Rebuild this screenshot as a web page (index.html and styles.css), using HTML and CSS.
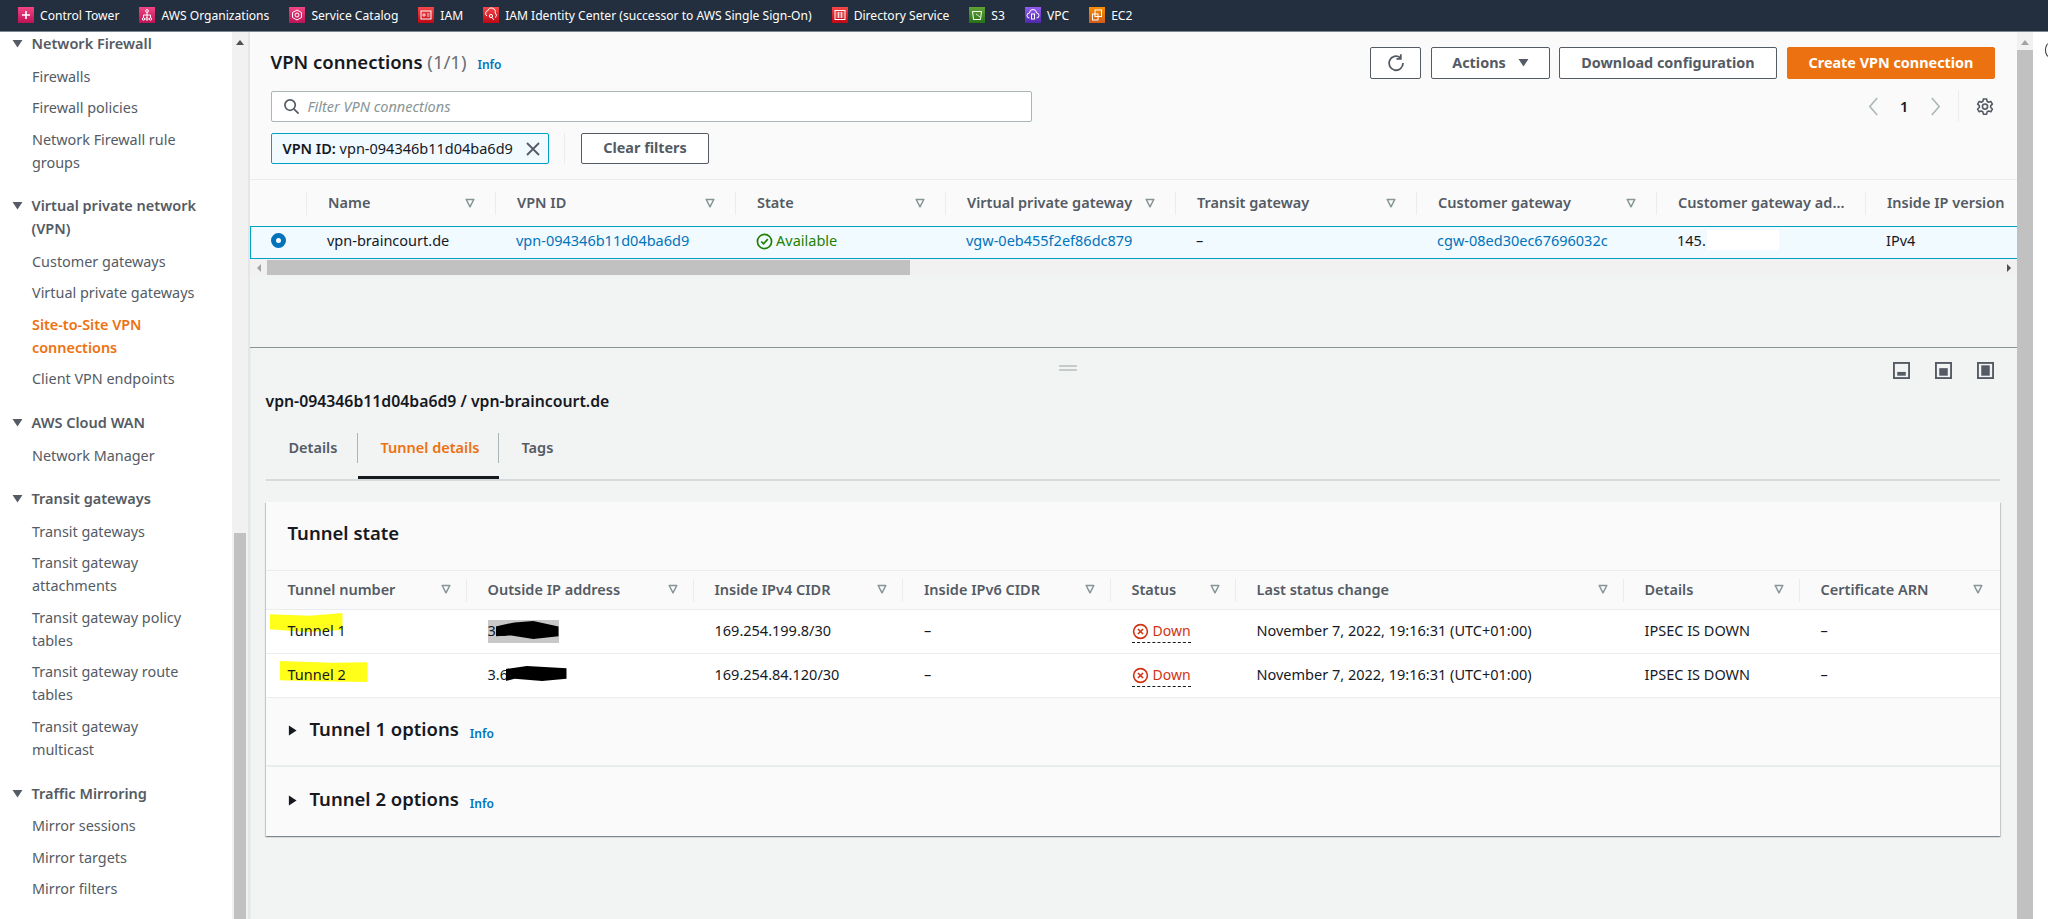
FILE: index.html
```html
<!DOCTYPE html>
<html lang="en">
<head>
<meta charset="utf-8">
<title>VPN connections</title>
<link rel="stylesheet" href="styles.css">
</head>
<body>
<svg class="defs" width="0" height="0" aria-hidden="true">
  <symbol id="caret" viewBox="0 0 10 10"><path d="M1.2 1.5h7.6L5 8.8z" fill="none" stroke="#879596" stroke-width="1.5" stroke-linejoin="round"/></symbol>
  <symbol id="tri" viewBox="0 0 12 10"><path d="M.5 1h11L6 9.5z" fill="#545b64"/></symbol>
  <symbol id="down" viewBox="0 0 18 18"><circle cx="9" cy="9" r="7.3" fill="none" stroke="#d13212" stroke-width="1.7"/><path d="M6.3 6.3l5.4 5.4M11.700 6.3l-5.4 5.4" stroke="#d13212" stroke-width="1.7"/></symbol>
  <symbol id="right" viewBox="0 0 10 12"><path d="M1 .5L9.5 6 1 11.5z" fill="#16191f"/></symbol>
</svg>

<header class="topbar">
  <a class="svc"><svg class="ico pink" viewBox="0 0 16 16"><path d="M8 4v8M4 8h8" stroke="#fff" stroke-width="1.6"/></svg>Control Tower</a>
  <a class="svc"><svg class="ico pink" viewBox="0 0 16 16"><path d="M8 5v3M4.500 11V8h7v3M8 8v3" fill="none" stroke="#fff"/><circle cx="8" cy="4" r="1.4" fill="none" stroke="#fff"/><circle cx="4.500" cy="12" r="1.2" fill="none" stroke="#fff"/><circle cx="8" cy="12" r="1.2" fill="none" stroke="#fff"/><circle cx="11.500" cy="12" r="1.2" fill="none" stroke="#fff"/></svg>AWS Organizations</a>
  <a class="svc"><svg class="ico pink" viewBox="0 0 16 16"><path d="M8 3l4.500 2.500v5L8 13l-4.500-2.500v-5z" fill="none" stroke="#fff"/><circle cx="8" cy="8" r="2" fill="none" stroke="#fff"/></svg>Service Catalog</a>
  <a class="svc"><svg class="ico red" viewBox="0 0 16 16"><rect x="3" y="4" width="10" height="8" fill="none" stroke="#fff"/><path d="M5 7h2v2H5zM9 7h2.500M9 9h2.500" fill="none" stroke="#fff" stroke-width=".8"/></svg>IAM</a>
  <a class="svc"><svg class="ico red" viewBox="0 0 16 16"><path d="M4 9a3 3 0 0 1 1-5.500A3.500 3.500 0 0 1 12 6a2.500 2.500 0 0 1 0 4.500" fill="none" stroke="#fff"/><circle cx="8" cy="9" r="1.600" fill="none" stroke="#fff"/><path d="M9 10.500l2 2.500" stroke="#fff"/></svg>IAM Identity Center (successor to AWS Single Sign-On)</a>
  <a class="svc"><svg class="ico red" viewBox="0 0 16 16"><rect x="3" y="3.500" width="10" height="9" fill="none" stroke="#fff"/><path d="M4.500 6h7M4.500 8h7M4.500 10h7M6.500 5v6M9.500 5v6" stroke="#fff" stroke-width=".7"/></svg>Directory Service</a>
  <a class="svc"><svg class="ico green" viewBox="0 0 16 16"><path d="M3.500 4.500h9l-1 8h-7z" fill="none" stroke="#fff"/><path d="M7 7l4 3" stroke="#fff" stroke-width=".8"/></svg>S3</a>
  <a class="svc"><svg class="ico purple" viewBox="0 0 16 16"><path d="M4.500 11a2.500 2.500 0 0 1 0-5 3.500 3.500 0 0 1 7 0 2.500 2.500 0 0 1 0 5" fill="none" stroke="#fff"/><rect x="6.500" y="7" width="3" height="5" fill="none" stroke="#fff"/></svg>VPC</a>
  <a class="svc"><svg class="ico orange" viewBox="0 0 16 16"><rect x="6" y="3" width="6.500" height="6.500" fill="none" stroke="#fff"/><rect x="3.500" y="7" width="5.500" height="6" fill="none" stroke="#fff"/></svg>EC2</a>
</header>

<div class="shell">
  <nav class="sidebar">
    <section class="group">
      <h3 class="group-head"><svg class="tri"><use href="#tri"/></svg>Network Firewall</h3>
      <ul class="links">
        <li>Firewalls</li><li>Firewall policies</li><li>Network Firewall rule groups</li>
      </ul>
    </section>
    <section class="group">
      <h3 class="group-head"><svg class="tri"><use href="#tri"/></svg>Virtual private network (VPN)</h3>
      <ul class="links">
        <li>Customer gateways</li><li>Virtual private gateways</li><li class="current">Site-to-Site VPN connections</li><li>Client VPN endpoints</li>
      </ul>
    </section>
    <section class="group">
      <h3 class="group-head"><svg class="tri"><use href="#tri"/></svg>AWS Cloud WAN</h3>
      <ul class="links"><li>Network Manager</li></ul>
    </section>
    <section class="group">
      <h3 class="group-head"><svg class="tri"><use href="#tri"/></svg>Transit gateways</h3>
      <ul class="links">
        <li>Transit gateways</li><li>Transit gateway attachments</li><li>Transit gateway policy tables</li><li>Transit gateway route tables</li><li>Transit gateway multicast</li>
      </ul>
    </section>
    <section class="group">
      <h3 class="group-head"><svg class="tri"><use href="#tri"/></svg>Traffic Mirroring</h3>
      <ul class="links"><li>Mirror sessions</li><li>Mirror targets</li><li>Mirror filters</li></ul>
    </section>
  </nav>
  <div class="vscroll side-scroll"><span class="up"></span><span class="thumb"></span></div>

  <main class="main">
    <section class="upper">
      <div class="list-head">
        <div class="head-row">
          <h1 class="page-title">VPN connections <span class="count">(1/1)</span><a class="info">Info</a></h1>
          <div class="actions">
            <button class="btn btn-icon"><svg viewBox="0 0 20 20" width="20" height="20"><path d="M14.300 4.700A7 7 0 1 0 17 10" fill="none" stroke="#545b64" stroke-width="1.800"/><path d="M14.800 1.200v4.600h-4.400" fill="none" stroke="#545b64" stroke-width="1.800"/></svg></button>
            <button class="btn btn-actions">Actions<svg class="act-tri" viewBox="0 0 12 10"><path d="M.5 1h11L6 9.500z" fill="#545b64"/></svg></button>
            <button class="btn btn-dl">Download configuration</button>
            <button class="btn btn-primary">Create VPN connection</button>
          </div>
        </div>
        <div class="filter-row">
          <div class="filter">
            <svg viewBox="0 0 18 18" width="17" height="17"><circle cx="7.500" cy="7.500" r="5.500" fill="none" stroke="#545b64" stroke-width="1.800"/><path d="M11.500 11.500l5 5" stroke="#545b64" stroke-width="1.800"/></svg>
            <span class="placeholder">Filter VPN connections</span>
          </div>
          <div class="pager">
            <svg class="chev" viewBox="0 0 10 18"><path d="M8.500 1L1.500 9l7 8" fill="none" stroke="#aab7b8" stroke-width="1.500"/></svg>
            <span class="page-no">1</span>
            <svg class="chev" viewBox="0 0 10 18"><path d="M1.500 1l7 8-7 8" fill="none" stroke="#aab7b8" stroke-width="1.500"/></svg>
            <span class="pager-sep"></span>
            <svg class="gear" viewBox="0 0 18 18"><path d="M7.400 1h3.200l.5 2.300 1.500.9 2.200-.8 1.600 2.800-1.700 1.500v1.800l1.700 1.500-1.600 2.800-2.200-.8-1.500.9-.5 2.300H7.400l-.5-2.300-1.500-.9-2.200.8-1.600-2.800 1.700-1.500V7.700L1.600 6.200l1.600-2.800 2.200.8 1.500-.9z" fill="none" stroke="#545b64" stroke-width="1.600" stroke-linejoin="round"/><circle cx="9" cy="8.600" r="2.600" fill="none" stroke="#545b64" stroke-width="1.600"/></svg>
          </div>
        </div>
        <div class="chip-row">
          <div class="chip"><span class="chip-text"><b>VPN ID:</b> vpn-094346b11d04ba6d9</span><svg viewBox="0 0 14 14" width="14" height="14"><path d="M1 1l12 12M13 1L1 13" stroke="#545b64" stroke-width="1.800"/></svg></div>
          <span class="chip-sep"></span>
          <button class="btn btn-clear">Clear filters</button>
        </div>
      </div>

      <div class="vpn-table">
        <div class="th th-radio"></div>
        <div class="th">Name<svg class="caret"><use href="#caret"/></svg></div>
        <div class="th">VPN ID<svg class="caret"><use href="#caret"/></svg></div>
        <div class="th">State<svg class="caret"><use href="#caret"/></svg></div>
        <div class="th">Virtual private gateway<svg class="caret"><use href="#caret"/></svg></div>
        <div class="th">Transit gateway<svg class="caret"><use href="#caret"/></svg></div>
        <div class="th">Customer gateway<svg class="caret"><use href="#caret"/></svg></div>
        <div class="th th-plain">Customer gateway ad...</div>
        <div class="th th-plain">Inside IP version</div>
      </div>
      <div class="vpn-table vpn-row">
        <div class="td td-radio"><span class="radio"></span></div>
        <div class="td">vpn-braincourt.de</div>
        <div class="td"><a class="link">vpn-094346b11d04ba6d9</a></div>
        <div class="td state-ok"><svg viewBox="0 0 18 18" width="17" height="17"><circle cx="9" cy="9" r="7.500" fill="none" stroke="#1d8102" stroke-width="1.800"/><path d="M5.500 9l2.500 2.500 4.500-5" fill="none" stroke="#1d8102" stroke-width="1.800"/></svg>Available</div>
        <div class="td"><a class="link">vgw-0eb455f2ef86dc879</a></div>
        <div class="td">–</div>
        <div class="td"><a class="link">cgw-08ed30ec67696032c</a></div>
        <div class="td">145.<span class="redact-white"></span></div>
        <div class="td">IPv4</div>
      </div>
      <div class="hscroll">
        <span class="h-left"></span>
        <span class="h-thumb"></span>
        <span class="h-right"></span>
      </div>
    </section>

    <section class="lower">
      <div class="lower-top">
        <span class="handle"></span>
        <div class="sizes">
          <svg class="size" viewBox="0 0 18 18"><rect x="1" y="1" width="16" height="16" fill="none" stroke="#545b64" stroke-width="2"/><rect x="4.500" y="10.500" width="9" height="4" fill="#545b64"/></svg>
          <svg class="size" viewBox="0 0 18 18"><rect x="1" y="1" width="16" height="16" fill="none" stroke="#545b64" stroke-width="2"/><rect x="4.500" y="6.500" width="9" height="8" fill="#545b64"/></svg>
          <svg class="size" viewBox="0 0 18 18"><rect x="1" y="1" width="16" height="16" fill="none" stroke="#545b64" stroke-width="2"/><rect x="4.500" y="3.500" width="9" height="11" fill="#545b64"/></svg>
        </div>
      </div>
      <h2 class="detail-title">vpn-094346b11d04ba6d9 / vpn-braincourt.de</h2>
      <div class="tabs">
        <a class="tab tab-first">Details</a>
        <a class="tab tab-active">Tunnel details</a>
        <a class="tab tab-last">Tags</a>
      </div>
      <article class="card">
        <h2 class="card-title">Tunnel state</h2>
        <div class="tun-table tun-head">
          <div class="th2">Tunnel number<svg class="caret"><use href="#caret"/></svg></div>
          <div class="th2">Outside IP address<svg class="caret"><use href="#caret"/></svg></div>
          <div class="th2">Inside IPv4 CIDR<svg class="caret"><use href="#caret"/></svg></div>
          <div class="th2">Inside IPv6 CIDR<svg class="caret"><use href="#caret"/></svg></div>
          <div class="th2">Status<svg class="caret"><use href="#caret"/></svg></div>
          <div class="th2">Last status change<svg class="caret"><use href="#caret"/></svg></div>
          <div class="th2">Details<svg class="caret"><use href="#caret"/></svg></div>
          <div class="th2">Certificate ARN<svg class="caret"><use href="#caret"/></svg></div>
        </div>
        <div class="tun-table tun-row">
          <div class="td2 mark-cell"><span class="mark mark-1"></span><span class="on-mark">Tunnel 1</span></div>
          <div class="td2 ip-cell"><span class="select-box"></span><span class="on-mark">3.6</span><span class="scribble scribble-1"></span></div>
          <div class="td2">169.254.199.8/30</div>
          <div class="td2">–</div>
          <div class="td2"><span class="down"><svg class="down-ico"><use href="#down"/></svg>Down</span></div>
          <div class="td2">November 7, 2022, 19:16:31 (UTC+01:00)</div>
          <div class="td2">IPSEC IS DOWN</div>
          <div class="td2">–</div>
        </div>
        <div class="tun-table tun-row">
          <div class="td2 mark-cell"><span class="mark mark-2"></span><span class="on-mark">Tunnel 2</span></div>
          <div class="td2 ip-cell"><span class="on-mark">3.6</span><span class="scribble scribble-2"></span></div>
          <div class="td2">169.254.84.120/30</div>
          <div class="td2">–</div>
          <div class="td2"><span class="down"><svg class="down-ico"><use href="#down"/></svg>Down</span></div>
          <div class="td2">November 7, 2022, 19:16:31 (UTC+01:00)</div>
          <div class="td2">IPSEC IS DOWN</div>
          <div class="td2">–</div>
        </div>
        <div class="option"><svg class="opt-arrow"><use href="#right"/></svg><h3 class="opt-title">Tunnel 1 options</h3><a class="info">Info</a></div>
        <div class="option"><svg class="opt-arrow"><use href="#right"/></svg><h3 class="opt-title">Tunnel 2 options</h3><a class="info">Info</a></div>
      </article>
    </section>
  </main>
  <div class="vscroll main-scroll"><span class="up"></span><span class="thumb"></span></div>
  <div class="edge"><span class="edge-arc"></span></div>
</div>
</body>
</html>
```

FILE: styles.css
```css
* { box-sizing: border-box; }
html, body { margin: 0; height: 919px; overflow: hidden; }
body {
  font-family: "Noto Sans", "Open Sans", sans-serif;
  font-size: 14.5px;
  color: #16191f;
  background: #fff;
  display: flex;
  flex-direction: column;
}
.defs { position: absolute; }
h1, h2, h3, ul { margin: 0; padding: 0; }
ul { list-style: none; }

/* top bar */
.topbar {
  height: 32px;
  flex: none;
  background: #232f3e;
  border-bottom: 1px solid #7c8792;
  display: flex;
  align-items: center;
  padding: 0 0 1px 18px;
  gap: 20px;
  color: #fff;
  font-size: 12.1px;
  white-space: nowrap;
}
.svc { display: flex; align-items: center; gap: 6px; }
.ico { width: 16px; height: 16px; flex: none; }
.pink { background: linear-gradient(#f34482, #bc1356); }
.red { background: linear-gradient(#f54749, #bd0816); }
.green { background: linear-gradient(#60a337, #277116); }
.purple { background: linear-gradient(#945df2, #4d27aa); }
.orange { background: linear-gradient(#f78e04, #d05c17); }

.shell { flex: 1; display: flex; min-height: 0; }

/* sidebar */
.sidebar {
  width: 232px;
  flex: none;
  padding: 0 32px 0 12px;
  font-size: 14.4px;
  color: #545b64;
  line-height: 23px;
  overflow: hidden;
  background: #fff;
}
.group { margin-bottom: 20.75px; }
.group-head {
  font-size: 14.5px;
  font-weight: 600;
  color: #545b64;
  padding-left: 19.5px;
  position: relative;
  line-height: 23px;
}
.tri { position: absolute; left: 0; top: 7px; width: 11px; height: 9px; }
.links { padding: 9.5px 0 0 20px; display: flex; flex-direction: column; gap: 8.5px; }
.current { color: #ec7211; font-weight: 600; }

/* scrollbars */
.vscroll { width: 18px; flex: none; background: #f1f1f1; display: flex; flex-direction: column; border-right: 1px solid #dfe2e2; padding: 0 2px; }
.side-scroll { border-right: 2px solid #e4e6e6; }
.main-scroll { width: 16px; padding: 0; border: 0; }
.up { width: 0; height: 0; border: 4px solid transparent; border-bottom: 5px solid #505050; border-top: 0; align-self: center; margin-top: 8px; }
.side-scroll .thumb { margin-top: 488px; flex: 1; background: #c1c1c1; }
.main-scroll .thumb { margin-top: 5px; flex: 1; background: #c1c1c1; }
.main-scroll .up { border-bottom-color: #a3a3a3; }

.edge { width: 15px; flex: none; position: relative; }
.edge-arc { position: absolute; left: 12px; top: 11px; width: 8px; height: 14px; border: 1.5px solid #333; border-radius: 50%; }

/* main */
.main { flex: 1; min-width: 0; background: #f2f3f3; display: flex; flex-direction: column; }
.upper { height: 316px; flex: none; border-bottom: 1px solid #879596; }
.list-head { height: 148px; background: #fafafa; padding: 15px 22px 0 20.5px; border-bottom: 1px solid #eaeded; }
.head-row { display: flex; justify-content: space-between; align-items: center; height: 32px; }
.page-title { font-size: 18.5px; font-weight: 600; line-height: 32px; }
.count { font-weight: 400; color: #687078; }
.info { color: #0073bb; font-size: 12px; font-weight: 600; margin-left: 11px; }
.actions { display: flex; gap: 10px; }
.btn {
  font: 700 14.4px "Noto Sans", sans-serif;
  height: 32px;
  background: #fff;
  color: #545b64;
  border: 1px solid #545b64;
  border-radius: 2px;
  padding: 0 0 1px;
  display: flex;
  align-items: center;
  justify-content: center;
}
.btn-icon { width: 51px; }
.btn-actions { width: 119px; gap: 12px; }
.act-tri { width: 11px; height: 9px; }
.btn-dl { width: 218px; margin-left: -1px; }
.btn-primary { width: 208px; background: #ec7211; border-color: #ec7211; color: #fff; }
.filter-row { display: flex; justify-content: space-between; margin-top: 12px; }
.filter {
  width: 761px;
  height: 31px;
  background: #fff;
  border: 1px solid #aab7b8;
  border-radius: 2px;
  display: flex;
  align-items: center;
  padding-left: 11px;
  gap: 8px;
}
.placeholder { font-style: italic; color: #879596; padding-bottom: 2px; }
.pager { display: flex; align-items: center; height: 31px; margin-right: 1px; }
.chev { width: 11px; height: 19px; }
.page-no { width: 20px; margin: 0 15.75px; text-align: center; font-weight: 600; color: #16191f; padding-bottom: 2px; }
.pager-sep { width: 1px; height: 31px; background: #eaeded; margin: 0 17px; }
.gear { width: 18px; height: 18px; }
.chip-row { display: flex; align-items: center; margin-top: 11px; }
.chip {
  width: 278.5px;
  height: 31px;
  background: #f1faff;
  border: 1px solid #00a1c9;
  border-radius: 2px;
  display: flex;
  align-items: center;
  justify-content: space-between;
  padding: 0 8px 0 11px;
  white-space: nowrap;
}
.chip-text { padding-bottom: 2px; }
.chip-text b { font-weight: 600; }
.chip-sep { width: 1px; height: 31px; background: #eaeded; margin: 0 16px 0 15px; }
.btn-clear { width: 128px; height: 31px; padding-bottom: 3px; }

.vpn-table {
  display: grid;
  grid-template-columns: 55px 189px 240px 210px 230px 241px 240px 209px 1fr;
  white-space: nowrap;
}
.vpn-table:not(.vpn-row) { height: 46px; background: #fafafa; align-items: center; padding-left: 1px; }
.th {
  height: 23px;
  padding: 0 20px 2px 21px;
  border-left: 1px solid #eaeded;
  color: #545b64;
  font-weight: 600;
  display: flex;
  justify-content: space-between;
  align-items: center;
}
.th .caret { margin-top: 2px; }
.th-radio { border-left: 0; }
.th-plain { padding-right: 0; }
.caret { width: 10px; height: 10px; flex: none; }
.vpn-row {
  height: 33px;
  background: #f1faff;
  border-top: 1px solid #00a1c9;
  border-bottom: 1px solid #00a1c9;
  border-left: 1px solid #00a1c9;
  align-items: center;
  padding-bottom: 5px;
}
.td { padding-left: 21px; display: flex; align-items: center; position: relative; }
.td-radio { padding-left: 20px; }
.radio { width: 15px; height: 15px; border-radius: 50%; border: 5px solid #0073bb; background: #fff; }
.link { color: #0073bb; }
.state-ok { color: #1d8102; gap: 3px; }
.state-ok svg { margin-top: 2px; }
.redact-white { position: absolute; left: 51px; top: 0; width: 72px; height: 20px; background: #fff; }
.hscroll { height: 17px; background: #f1f1f1; display: flex; align-items: center; position: relative; }
.h-left, .h-right { width: 0; height: 0; border: 4px solid transparent; }
.h-left { border-right: 4px solid #a3a3a3; border-left: 0; margin-left: 7px; }
.h-thumb { width: 643px; height: 15px; background: #c1c1c1; margin-left: 6px; }
.h-right { border-left: 4px solid #505050; border-right: 0; margin-left: auto; margin-right: 6px; }

/* lower pane */
.lower { flex: 1; padding: 0 17px 0 14.5px; border-left: 1px solid #eaeded; min-height: 0; }
.lower-top { height: 31px; display: flex; justify-content: space-between; padding-top: 14px; position: relative; }
.handle { width: 18px; height: 6px; margin-left: 793.5px; margin-top: 3px; border-top: 2px solid #c5cbcb; border-bottom: 2px solid #c5cbcb; }
.sizes { display: flex; gap: 25px; margin-right: 6px; }
.size { width: 17px; height: 17px; }
.detail-title { font-size: 15.8px; font-weight: 600; line-height: 24px; margin-top: 10px; white-space: nowrap; }
.tabs { display: flex; height: 48px; margin-top: 20px; border-bottom: 2px solid #d5dbdb; color: #545b64; font-weight: 600; }
.tab { height: 46px; padding: 0 0 18px 23px; display: flex; align-items: center; position: relative; }
.tab-first { width: 92px; padding-left: 23px; }
.tab-active { width: 141px; color: #ec7211; }
.tab-first::after, .tab-active::after { content: ""; position: absolute; right: 0; top: 0; width: 1px; height: 30px; background: #aab7b8; }
.tab-active::before { content: ""; position: absolute; left: 0; right: 0; bottom: 0; height: 3px; background: #16191f; }
.card { margin-top: 21px; height: 334px; background: #fafafa; box-shadow: 0 1px 1px 0 rgba(0,28,36,.3), 1px 1px 1px 0 rgba(0,28,36,.15), -1px 1px 1px 0 rgba(0,28,36,.15); }
.card-title { font-size: 18.5px; font-weight: 600; height: 68px; line-height: 62px; padding-left: 22px; }
.tun-table {
  display: grid;
  grid-template-columns: 200px 227px 209.5px 207.5px 125px 388px 176px 1fr;
  white-space: nowrap;
}
.tun-head { height: 40px; border-top: 1px solid #eaeded; border-bottom: 1px solid #eaeded; align-items: center; }
.th2 { height: 23px; padding: 0 15px 3px 21px; border-left: 1px solid #eaeded; color: #545b64; font-weight: 600; display: flex; justify-content: space-between; align-items: center; }
.th2:first-child { border-left: 0; padding-left: 22px; }
.th2:last-child { padding-right: 17px; }
.tun-row { height: 44px; background: #fff; border-bottom: 1px solid #eaeded; align-items: center; padding-bottom: 3px; }
.td2 { padding-left: 22px; position: relative; }
.on-mark { position: relative; }
.mark { position: absolute; background: #ffff1a; }
.mark-1 { left: 4px; top: -7px; width: 73px; height: 19px; clip-path: polygon(0 6%, 55% 14%, 100% 0, 100% 90%, 50% 100%, 0 85%); }
.mark-2 { left: 14px; top: -3px; width: 88px; height: 21px; clip-path: polygon(0 0, 60% 8%, 100% 6%, 100% 100%, 40% 96%, 0 92%); }
.select-box { position: absolute; left: 22px; top: 0; width: 71px; height: 23px; background: #c8c8c8; }
.scribble { position: absolute; background: #000; }
.scribble-1 { left: 30px; top: 1px; width: 63px; height: 18px; clip-path: polygon(0 30%, 30% 8%, 60% 0, 100% 30%, 100% 85%, 60% 100%, 25% 80%, 0 85%); }
.scribble-2 { left: 40px; top: 2px; width: 61px; height: 15px; clip-path: polygon(0 20%, 35% 0, 100% 15%, 100% 85%, 60% 100%, 15% 85%, 0 100%); }
.down { color: #d13212; display: inline-flex; align-items: center; gap: 4px; border-bottom: 1px dashed #16191f; padding-bottom: 2px; position: relative; top: 2px; font-size: 14px; }
.down-ico { width: 17px; height: 17px; margin-top: 2px; }
.option { height: 69px; display: flex; align-items: center; padding: 0 0 6px 22px; border-bottom: 2px solid #eaeded; }
.option:last-child { border-bottom: 0; }
.opt-arrow { width: 9px; height: 11px; margin: 3px 13px 0 0; }
.opt-title { font-size: 18.5px; font-weight: 600; }
.option .info { margin-left: 11px; margin-top: 10px; }
```
